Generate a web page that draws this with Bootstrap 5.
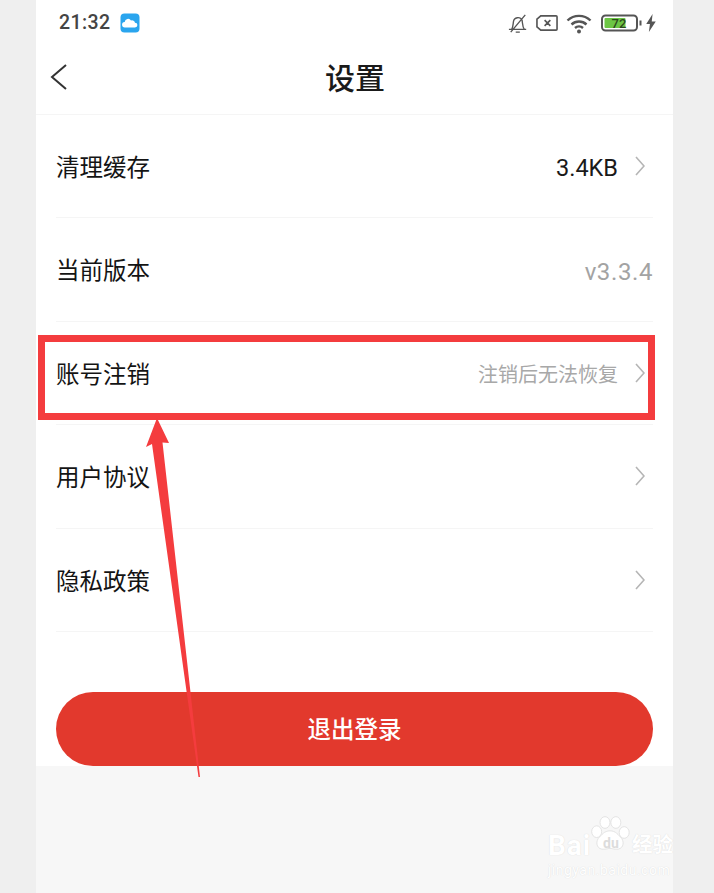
<!DOCTYPE html>
<html lang="zh-CN">
<head>
  <meta charset="UTF-8" />
  <meta name="viewport" content="width=device-width, initial-scale=1">
  <title>设置</title>
  <link href="https://cdn.jsdelivr.net/npm/bootstrap@5.3.0/dist/css/bootstrap.min.css" rel="stylesheet" />
  <style>
    html, body { height: 893px; overflow: hidden; }
    body {
      background: #efefef;
      font-family: Roboto, "Noto Sans CJK SC", sans-serif;
      color: #141414;
      position: relative;
    }
    .phone { width: 637px; height: 893px; margin-left: 36px; background: #f7f7f7; }
    .screen-top { background: #fff; height: 766px; }
    .status-bar { height: 45px; padding: 1px 16px 0 23px; color: #444; }
    .status-time { font-size: 19.500px; font-weight: 500; letter-spacing: .4px; }
    .status-cloud { margin-left: 10px; }
    .status-batt { gap: 1px; }
    .title-bar { height: 70px; border-bottom: 1px solid #f5f5f5; position: relative; }
    .back-btn { padding: 18px 0 0 14px; line-height: 0; border: 0; }
    .page-title { font-size: 30px; font-weight: 500; line-height: 1; margin: 0; position: absolute; left: 289px; top: 19px; color: #1a1a1a; }
    .setting-list { padding: 0 20px; border-radius: 0; }
    .setting-row {
      height: 103.4px; padding: 0; border-color: #f5f5f5;
      font-size: 23.500px; color: #141414;
    }
    .setting-row.list-group-item:last-child { border-bottom: 1px solid #f5f5f5; }
    .row-label { padding-top: 5px; }
    .row-value { font-size: 23.500px; color: #1a1a1a; padding-top: 4px; }
    .row-version { font-size: 24px; color: #a3a3a3; letter-spacing: .6px; padding-top: 4px; }
    .row-note { font-size: 20px; color: #a8a8a8; padding-top: 4px; }
    .chev { margin: 0 8px 0 17px; flex: none; }
    .logout-btn {
      width: 597px; height: 74px; margin: 60px 0 0 20px; padding: 3px 0 0;
      background: #e2392d; border: 0; color: #fff;
      font-size: 23.500px; font-weight: 500; letter-spacing: 0;
    }
    .logout-btn:hover { background: #e2392d; color: #fff; }
    .mark-box { position: absolute; left: 38px; top: 335px; width: 617px; height: 85px; border: 7px solid #f43c3e; }
    .mark-arrow { position: absolute; left: 140px; top: 415px; }
    .watermark { position: absolute; left: 548px; top: 815px; width: 130px; color: #fff; }
    .wm-main { font-size: 28px; font-weight: 700; line-height: 1; position: absolute; left: 0; top: 17px; white-space: nowrap; text-shadow: 0 0 1px #d4d4d4; letter-spacing: 1px; }
    .wm-cn { font-size: 20.500px; font-weight: 700; position: absolute; left: 84px; top: 20px; line-height: 1; white-space: nowrap; text-shadow: 0 0 1px #d4d4d4; }
    .wm-url { font-size: 14px; position: absolute; left: 0; top: 48px; line-height: 1; white-space: nowrap; letter-spacing: .5px; text-shadow: 0 0 1px #d4d4d4; }
    .wm-paw { position: absolute; left: 42px; top: 0; }
    .wm-du { font-size: 14px; font-weight: 700; position: absolute; left: 55px; top: 21px; line-height: 1; color: #dcdcdc; }
  </style>
</head>
<body>
  <div class="phone">
    <div class="screen-top">
      <!-- status bar -->
      <div class="status-bar d-flex align-items-center">
        <span class="status-time">21:32</span>
        <svg class="status-cloud" width="20" height="20" viewBox="0 0 20 20">
          <rect x="0.5" y="0.5" width="19" height="19" rx="4" fill="#2aa5ee"/>
          <path d="M5 14.5a2.800 2.800 0 0 1-.3-5.600 3.400 3.400 0 0 1 6.300-1.400 3 3 0 0 1 4 2.200 2.400 2.400 0 0 1 0 4.800z" fill="#fff"/>
        </svg>
        <div class="d-flex align-items-center ms-auto gap-2">
          <svg width="20" height="23" viewBox="0 0 22 23" fill="none" stroke="#555" stroke-width="1.500">
            <path d="M1 18h19M4 18c1.500-2 1.500-5 2-8.500a5 5 0 0 1 9.500-1.500c.6 3 .2 7 2.500 10M8.500 21h4.500M3 21L19 2"/>
          </svg>
          <svg width="22" height="18" viewBox="0 0 23 18" fill="none" stroke="#555" stroke-width="1.700">
            <path d="M5 1.500h16a1 1 0 0 1 1 1v13a1 1 0 0 1-1 1H5l-4-3.500V5zM9 6l6 6M15 6l-6 6"/>
          </svg>
          <svg width="27" height="21" viewBox="0 0 27 21" fill="none" stroke="#555" stroke-width="2.400">
            <path d="M1.500 7.500a16.500 16.500 0 0 1 23 0M5.500 11.500a11 11 0 0 1 15 0M9 15a6 6 0 0 1 8 0"/>
            <circle cx="13" cy="18.500" r="2" fill="#555" stroke="none"/>
          </svg>
          <div class="d-flex align-items-center status-batt">
            <svg width="43" height="18" viewBox="0 0 43 18">
              <rect x="1" y="1.500" width="35" height="15" rx="3.500" fill="#fff" stroke="#555" stroke-width="2"/>
              <rect x="3.500" y="4" width="21" height="10" rx="1" fill="#6cc644"/>
              <text x="18" y="14" text-anchor="middle" font-family="Roboto, sans-serif" font-size="13" font-weight="500" fill="#2c4a1c">72</text>
              <rect x="38.500" y="6.500" width="2" height="5" fill="#555"/>
            </svg>
            <svg width="12" height="18" viewBox="0 0 10 17">
              <path d="M6.500 0L0.500 9.500h3.500l-1 7.500 6.500-10h-3.800z" fill="#555"/>
            </svg>
          </div>
        </div>
      </div>
      <!-- title -->
      <div class="title-bar">
        <button class="btn back-btn" type="button" aria-label="返回">
          <svg width="18" height="28" viewBox="0 0 18 28" fill="none" stroke="#333" stroke-width="2">
            <path d="M16 2L2 14l14 12"/>
          </svg>
        </button>
        <h1 class="page-title">设置</h1>
      </div>
      <!-- rows -->
      <div class="list-group list-group-flush setting-list">
        <div class="list-group-item setting-row d-flex align-items-center">
          <span class="row-label">清理缓存</span>
          <span class="row-value ms-auto">3.4KB</span>
          <svg class="chev" width="10" height="20" viewBox="0 0 10 20" fill="none" stroke="#b5b5b5" stroke-width="1.600"><path d="M1 1l8 9-8 9"/></svg>
        </div>
        <div class="list-group-item setting-row d-flex align-items-center">
          <span class="row-label">当前版本</span>
          <span class="row-version ms-auto">v3.3.4</span>
        </div>
        <div class="list-group-item setting-row d-flex align-items-center">
          <span class="row-label">账号注销</span>
          <span class="row-note ms-auto">注销后无法恢复</span>
          <svg class="chev" width="10" height="20" viewBox="0 0 10 20" fill="none" stroke="#b5b5b5" stroke-width="1.600"><path d="M1 1l8 9-8 9"/></svg>
        </div>
        <div class="list-group-item setting-row d-flex align-items-center">
          <span class="row-label">用户协议</span>
          <svg class="chev ms-auto" width="10" height="20" viewBox="0 0 10 20" fill="none" stroke="#b5b5b5" stroke-width="1.600"><path d="M1 1l8 9-8 9"/></svg>
        </div>
        <div class="list-group-item setting-row d-flex align-items-center">
          <span class="row-label">隐私政策</span>
          <svg class="chev ms-auto" width="10" height="20" viewBox="0 0 10 20" fill="none" stroke="#b5b5b5" stroke-width="1.600"><path d="M1 1l8 9-8 9"/></svg>
        </div>
      </div>
      <button class="btn rounded-pill logout-btn d-block" type="button">退出登录</button>
    </div>
  </div>

  <!-- annotation drawn over the screenshot -->
  <div class="mark-box"></div>
  <svg class="mark-arrow" width="70" height="365" viewBox="0 0 70 365">
    <path d="M17 3L29 28 22.500 27.500 60 362 58.500 362 12 29 6 32z" fill="#f43c3e"/>
  </svg>

  <!-- watermark -->
  <div class="watermark">
    <svg class="wm-paw" width="40" height="40" viewBox="0 0 48 44" fill="#fff" stroke="#dedede" stroke-width="1">
      <ellipse cx="8" cy="18" rx="6" ry="7"/>
      <ellipse cx="18" cy="7" rx="6" ry="7"/>
      <ellipse cx="31" cy="7" rx="6" ry="7"/>
      <ellipse cx="41" cy="19" rx="6" ry="7"/>
      <path d="M24 17c7 0 10 5 14 9 4 6 1 14-7 13-3 0-5-1-7-1s-4 1-7 1c-8 1-11-7-7-13 4-4 7-9 14-9z"/>
    </svg>
    <span class="wm-du">du</span>
    <span class="wm-main">Bai</span>
    <span class="wm-cn">经验</span>
    <span class="wm-url">jingyan.baidu.com</span>
  </div>

  <script src="https://cdn.jsdelivr.net/npm/bootstrap@5.3.0/dist/js/bootstrap.bundle.min.js"></script>
</body>
</html>
